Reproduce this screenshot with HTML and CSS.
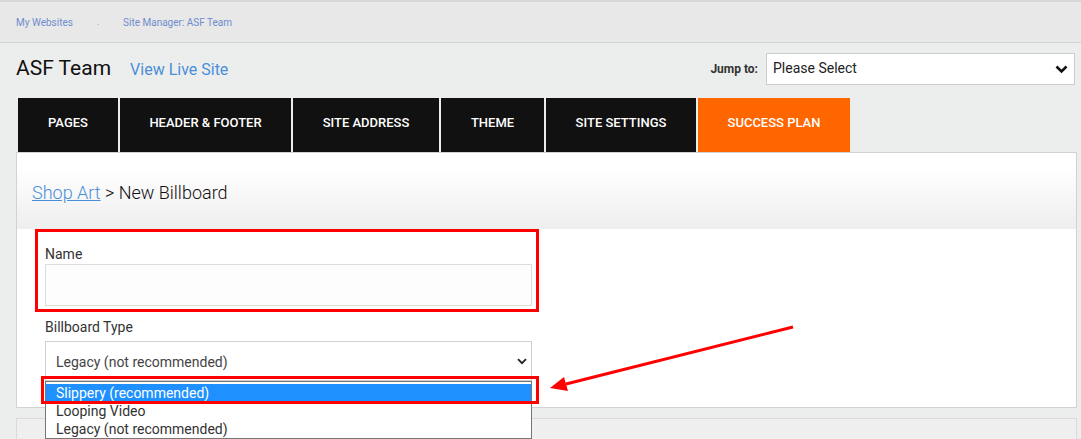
FILE: index.html
```html
<!DOCTYPE html>
<html lang="en">
<head>
    <meta charset="UTF-8">
    <title>Site Manager: ASF Team</title>
    <link rel="stylesheet" href="styles.css">
</head>
<body>
    <div class="crumbs">
        <a href="#">My Websites</a>
        <span class="sep">.</span>
        <a href="#">Site Manager: ASF Team</a>
    </div>

    <div class="site-head">
        <div class="site-title">
            <h1>ASF Team</h1>
            <a href="#" class="live">View Live Site</a>
        </div>
        <div class="jump">
            <label>Jump to:</label>
            <div class="jump-select">
                <span>Please Select</span>
                <svg width="13" height="9" viewBox="0 0 13 9"><path d="M1.5 1.5 L6.5 6.5 L11.5 1.5" fill="none" stroke="#111" stroke-width="2.6"/></svg>
            </div>
        </div>
    </div>

    <nav class="tabs">
        <a href="#" class="t1">PAGES</a>
        <a href="#" class="t2">HEADER &amp; FOOTER</a>
        <a href="#" class="t3">SITE ADDRESS</a>
        <a href="#" class="t4">THEME</a>
        <a href="#" class="t5">SITE SETTINGS</a>
        <a href="#" class="t6 active">SUCCESS PLAN</a>
    </nav>

    <section class="panel">
        <div class="panel-head">
            <a href="#">Shop Art</a> &gt; New Billboard
        </div>
        <div class="panel-body">
            <div class="field">
                <label>Name</label>
                <div class="input"></div>
            </div>
            <div class="field">
                <label>Billboard Type</label>
                <div class="select">
                    <span>Legacy (not recommended)</span>
                    <svg width="10" height="7" viewBox="0 0 10 7"><path d="M1 1.2 L5 5.2 L9 1.2" fill="none" stroke="#222" stroke-width="1.8"/></svg>
                </div>
                <ul class="options">
                    <li class="hl">Slippery (recommended)</li>
                    <li>Looping Video</li>
                    <li>Legacy (not recommended)</li>
                </ul>
            </div>

            <!-- annotations drawn over the form -->
            <div class="mark mark-name"></div>
            <div class="mark mark-opt"></div>
        </div>
    </section>
    <section class="panel-next"></section>

    <svg class="arrow" width="1081" height="439" viewBox="0 0 1081 439">
        <line x1="793" y1="327" x2="566" y2="384" stroke="#f00" stroke-width="3"/>
        <polygon points="550,388 564,377 568,391" fill="#f00"/>
    </svg>
</body>
</html>
```

FILE: styles.css
```css
body { margin: 0; background: #eceeed; font-family: Roboto, "Liberation Sans", Arial, sans-serif; color: #222; overflow: hidden; }
a { text-decoration: none; }

.crumbs { height: 40px; border-top: 2px solid #d6d7d6; border-bottom: 1px solid #d3d4d3; background: #e7e8e7; display: flex; align-items: center; padding-left: 16px; font-size: 10px; }
.crumbs a { color: #6f8ccf; }
.crumbs .sep { color: #888; margin: 0 24px 0 24px; font-size: 8px; }

.site-head { height: 55px; box-sizing: border-box; display: flex; justify-content: space-between; align-items: flex-start; padding: 10px 6px 0 16px; }
.site-title { display: flex; align-items: baseline; margin-top: 3px; }
.site-title h1 { margin: 0; font-size: 21px; font-weight: 400; color: #111; }
.site-title .live { margin-left: 19px; font-size: 16px; color: #4a8fd8; }
.jump { display: flex; align-items: center; }
.jump label { font-size: 12px; font-weight: 700; color: #333; margin-right: 8px; }
.jump-select { width: 295px; height: 30px; background: #fff; border: 1px solid #ccc; display: flex; align-items: center; justify-content: space-between; padding: 0 6px 0 6px; font-size: 14px; color: #222; }
.jump-select span { margin-top: -3px; }

.tabs { display: flex; gap: 2px; margin-left: 18px; height: 54px; }
.tabs a { background: #111; color: #fff; font-size: 13px; font-weight: 500; display: flex; align-items: center; justify-content: center; padding-bottom: 5px; box-sizing: border-box; }
.tabs .t1 { width: 100px; }
.tabs .t2 { width: 171px; }
.tabs .t3 { width: 146px; }
.tabs .t4 { width: 103px; }
.tabs .t5 { width: 150px; }
.tabs .t6 { width: 152px; }
.tabs a.active { background: #ff6600; }

.panel { margin: 0 4px 0 16px; background: #fff; border: 1px solid #d2d2d2; }
.panel-head { height: 76px; box-sizing: border-box; padding: 29px 0 0 15px; font-size: 18px; font-weight: 300; color: #111; background: linear-gradient(#fff 20%, #eeeeee); }
.panel-head a { color: #4a8fd8; text-decoration: underline; }

.panel-body { position: relative; padding: 16px 0 26px 28px; }
.field { position: relative; width: 487px; }
.field label { display: block; font-size: 14px; color: #333; line-height: 18px; margin-bottom: 1px; }
.input { height: 40px; border: 1px solid #dcdcdc; background: #fdfdfd; margin-bottom: 12px; }
.field + .field label { margin-bottom: 5px; }
.select { height: 38px; border: 1px solid #cfcfcf; background: #fff; display: flex; align-items: center; justify-content: space-between; padding: 0 4px 0 10px; font-size: 14px; color: #444; }
.select span { margin-top: 1px; }

.options { position: absolute; left: 0; top: 100%; width: 485px; margin: 0; padding: 2px 0 0; list-style: none; background: #fff; border: 1px solid #767676; font-size: 14px; color: #333; z-index: 2; }
.options li { height: 18px; line-height: 18px; padding-left: 10px; }
.options li.hl { background: #1e90ff; color: #fff; }

.mark { position: absolute; border: 3px solid #f00; z-index: 3; }
.mark-name { left: 18px; top: 0; width: 498px; height: 77px; }
.mark-opt { left: 24px; top: 147px; width: 492px; height: 22px; }

.panel-next { margin: 10px 4px 0 16px; height: 40px; background: #efefef; border: 1px solid #dadada; }

.arrow { position: absolute; left: 0; top: 0; z-index: 4; pointer-events: none; }
```
